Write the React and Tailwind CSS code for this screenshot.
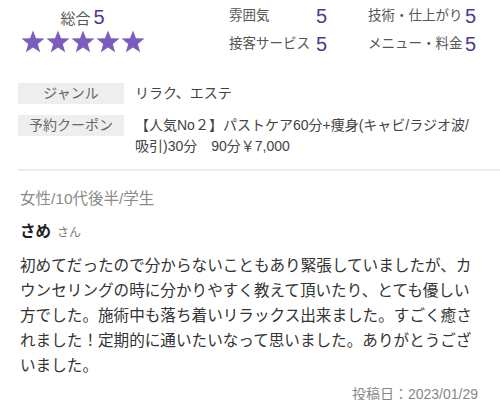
import React from 'react'

const FONT = '"Liberation Sans", "Noto Sans CJK JP", sans-serif'

function Star() {
  return (
    <svg width="24" height="23" viewBox="0 0 24 23">
      <polygon
        points="12,0.5 15,8.3 23.5,8.6 16.8,13.9 19.2,22.3 12,17.4 4.8,22.3 7.2,13.9 0.5,8.6 9,8.3"
        fill="#7c5cbd"
      />
    </svg>
  )
}

function Score({ label, value }) {
  return (
    <div className="flex items-center justify-between h-[28px] whitespace-nowrap">
      <span className="text-[13.5px] text-[#555]">{label}</span>
      <span className="text-[20px] leading-none text-[#4b3a91]">{value}</span>
    </div>
  )
}

function InfoRow({ label, children }) {
  return (
    <div className="flex items-start">
      <div className="w-[106px] h-[21px] flex-shrink-0 bg-[#eeeeee] flex items-center justify-center text-[14px] text-[#666]">
        {label}
      </div>
      <div className="ml-[11px] text-[14px] leading-[21px] text-[#444]">{children}</div>
    </div>
  )
}

export default function App() {
  return (
    <div className="w-[500px] h-[400px] bg-white overflow-hidden" style={{ fontFamily: FONT }}>
      {/* 評価 */}
      <div className="flex pt-[2px]">
        <div className="w-[165px] flex flex-col items-center">
          <div className="flex items-baseline h-[24px]">
            <span className="text-[15px] text-[#555]">総合</span>
            <span className="text-[20px] text-[#4b3a91] ml-[3px]">5</span>
          </div>
          <div className="flex gap-[1px] mt-[4px]">
            <Star /><Star /><Star /><Star /><Star />
          </div>
        </div>
        <div className="ml-[64px] grid grid-cols-[98px_108px] gap-x-[41px]">
          <Score label="雰囲気" value="5" />
          <Score label="技術・仕上がり" value="5" />
          <Score label="接客サービス" value="5" />
          <Score label="メニュー・料金" value="5" />
        </div>
      </div>

      {/* ジャンル・クーポン */}
      <div className="ml-[18px] mt-[25px] flex flex-col gap-[11px]">
        <InfoRow label="ジャンル">リラク、エステ</InfoRow>
        <InfoRow label="予約クーポン">
          <span className="block whitespace-nowrap">【人気No２】パストケア60分+痩身(キャビ/ラジオ波/</span>
          <span className="block whitespace-nowrap">吸引)30分　90分￥7,000</span>
        </InfoRow>
      </div>

      <div className="ml-[18px] mt-[12px] h-[2px] bg-[#ececec]" />

      {/* 口コミ */}
      <div className="px-[20px]">
        <p className="mt-[18px] text-[15.5px] leading-[20px] text-[#8a8a8a]">女性/10代後半/学生</p>
        <p className="mt-[13px] leading-[20px]">
          <span className="text-[15.5px] font-bold text-[#222]">さめ</span>
          <span className="ml-[6px] text-[12px] text-[#777]">さん</span>
        </p>
        <p className="mt-[10px] w-[456px] text-[15.6px] leading-[25px] text-[#333]">
          初めてだったので分からないこともあり緊張していましたが、カウンセリングの時に分かりやすく教えて頂いたり、とても優しい方でした。施術中も落ち着いリラックス出来ました。すごく癒されました！定期的に通いたいなって思いました。ありがとうございました。
        </p>
        <p className="mt-[8px] pr-[2px] text-right text-[14px] leading-[16px] text-[#888]">投稿日：2023/01/29</p>
      </div>
    </div>
  )
}
